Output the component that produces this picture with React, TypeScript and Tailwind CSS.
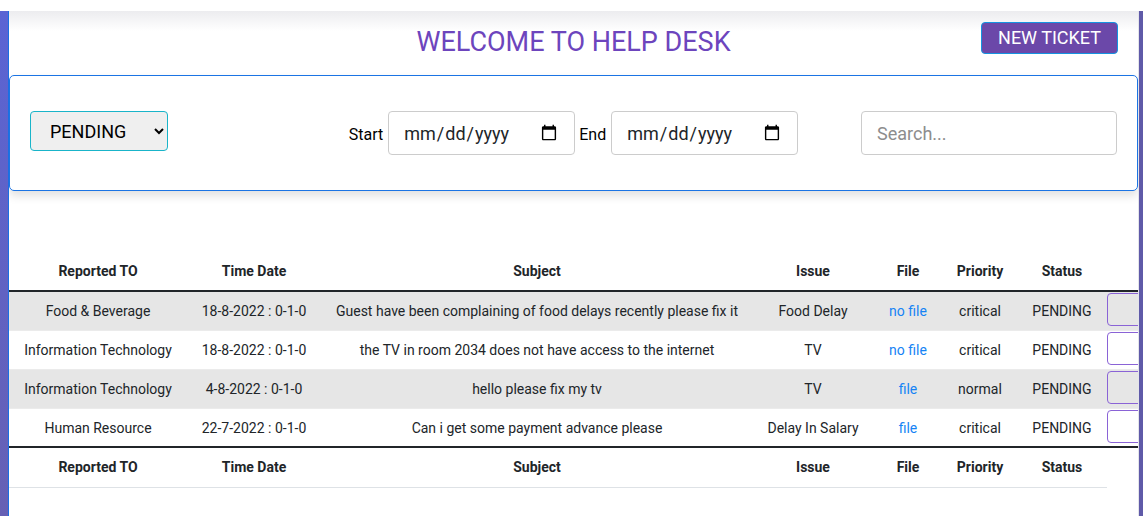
import React from 'react';

interface Ticket {
  dept: string;
  date: string;
  subject: string;
  issue: string;
  file: string;
  priority: string;
  status: string;
}

const TICKETS: Ticket[] = [
  { dept: 'Food & Beverage', date: '18-8-2022 : 0-1-0', subject: 'Guest have been complaining of food delays recently please fix it', issue: 'Food Delay', file: 'no file', priority: 'critical', status: 'PENDING' },
  { dept: 'Information Technology', date: '18-8-2022 : 0-1-0', subject: 'the TV in room 2034 does not have access to the internet', issue: 'TV', file: 'no file', priority: 'critical', status: 'PENDING' },
  { dept: 'Information Technology', date: '4-8-2022 : 0-1-0', subject: 'hello please fix my tv', issue: 'TV', file: 'file', priority: 'normal', status: 'PENDING' },
  { dept: 'Human Resource', date: '22-7-2022 : 0-1-0', subject: 'Can i get some payment advance please', issue: 'Delay In Salary', file: 'file', priority: 'critical', status: 'PENDING' },
];

const COLS = ['Reported TO', 'Time Date', 'Subject', 'Issue', 'File', 'Priority', 'Status'];

function HeadRow({ bottom }: { bottom?: boolean }) {
  return (
    <tr className={bottom ? 'h-[40px]' : 'h-[38px]'}>
      {COLS.map(c => (
        <th key={c} className={`px-2 text-center text-[14px] font-bold text-[#212529] ${bottom ? 'border-b border-[#dee2e6] pt-[1px]' : ''}`}>
          {c}
        </th>
      ))}
      <th />
    </tr>
  );
}

export default function App() {
  return (
    <div className="w-[1143px] h-[516px] overflow-hidden bg-white font-['Roboto',sans-serif]">
      <div className="h-[11px] bg-white" />
      <div className="flex h-[505px]">
        <div className="w-[9px] shrink-0 bg-gradient-to-b from-[#5a64d4] to-[#6660b4] border-r border-[#1b6fe3]" />

        <div className="w-[1129px] shrink-0 overflow-hidden bg-white">
          {/* header */}
          <div className="h-[64px] grid grid-cols-[1fr_auto_1fr] items-start bg-[linear-gradient(to_bottom,#ececef,#ffffff_20px)]">
            <div />
            <h1 className="mt-[15px] text-[27px] leading-[32px] text-[#6d45bd]">WELCOME TO HELP DESK</h1>
            <div className="flex justify-end pr-[20px] pt-[11px]">
              <button className="h-[32px] px-[16px] rounded-[4px] bg-[#6b48a9] border border-[#1593e0] text-white text-[18px] leading-none">
                NEW TICKET
              </button>
            </div>
          </div>

          {/* filters */}
          <div className="h-[116px] border border-[#1b74e4] rounded-[5px] shadow-[0_5px_10px_rgba(0,0,0,0.12)] px-[20px] flex items-center">
            <div className="flex-1 flex items-center">
              <select className="mt-[-4px] w-[138px] h-[40px] pl-[15px] pr-[6px] bg-[#efefef] border border-[#19b4c9] rounded-[4px] text-[18px] text-black" defaultValue="PENDING">
                <option>PENDING</option>
                <option>RESOLVED</option>
                <option>ALL</option>
              </select>
            </div>
            <div className="flex items-center shrink-0">
              <span className="mt-[3px] text-[16px] text-black mr-[5px]">Start</span>
              <input type="date" className="w-[187px] h-[44px] px-[14px] border border-[#cccccc] rounded-[4px] text-[18px] text-[#212529]" />
              <span className="mt-[3px] text-[16px] text-black ml-[4px] mr-[5px]">End</span>
              <input type="date" className="w-[187px] h-[44px] px-[14px] border border-[#cccccc] rounded-[4px] text-[18px] text-[#212529]" />
            </div>
            <div className="flex-1 flex justify-end">
              <input placeholder="Search..." className="w-[256px] h-[44px] px-[15px] border border-[#cccccc] rounded-[4px] text-[18px] text-[#212529] placeholder:text-[#8d8d8d] outline-none" />
            </div>
          </div>

          {/* tickets */}
          <table className="mt-[62px] w-[1198px] table-fixed border-collapse text-[14px] text-[#212529]">
            <colgroup>
              <col className="w-[178px]" />
              <col className="w-[134px]" />
              <col className="w-[432px]" />
              <col className="w-[120px]" />
              <col className="w-[70px]" />
              <col className="w-[74px]" />
              <col className="w-[90px]" />
              <col className="w-[100px]" />
            </colgroup>
            <thead>
              <HeadRow />
            </thead>
            <tbody className="border-t-2 border-[#212529]">
              {TICKETS.map((t, i) => (
                <tr key={i} className={`h-[39px] border-b border-[#ebebeb] ${i % 2 === 0 ? 'bg-[#e6e6e6]' : 'bg-white'}`}>
                  <td className="px-2 pt-[2px] text-center whitespace-nowrap">{t.dept}</td>
                  <td className="px-2 pt-[2px] text-center whitespace-nowrap">{t.date}</td>
                  <td className="px-2 pt-[2px] text-center whitespace-nowrap">{t.subject}</td>
                  <td className="px-2 pt-[2px] text-center whitespace-nowrap">{t.issue}</td>
                  <td className="px-2 pt-[2px] text-center whitespace-nowrap text-[#1583f5]">{t.file}</td>
                  <td className="px-2 pt-[2px] text-center whitespace-nowrap">{t.priority}</td>
                  <td className="px-2 pt-[2px] text-center whitespace-nowrap">{t.status}</td>
                  <td className="p-0 align-top">
                    <button className="mt-px block w-[90px] h-[33px] border border-[#8a63d6] rounded-[4px] bg-transparent" />
                  </td>
                </tr>
              ))}
            </tbody>
            <tfoot className="border-t-2 border-[#212529]">
              <HeadRow bottom />
            </tfoot>
          </table>
        </div>

        <div className="flex-1 bg-[#5f5aa8] border-l border-[#e4e4ea]" />
      </div>
    </div>
  );
}
